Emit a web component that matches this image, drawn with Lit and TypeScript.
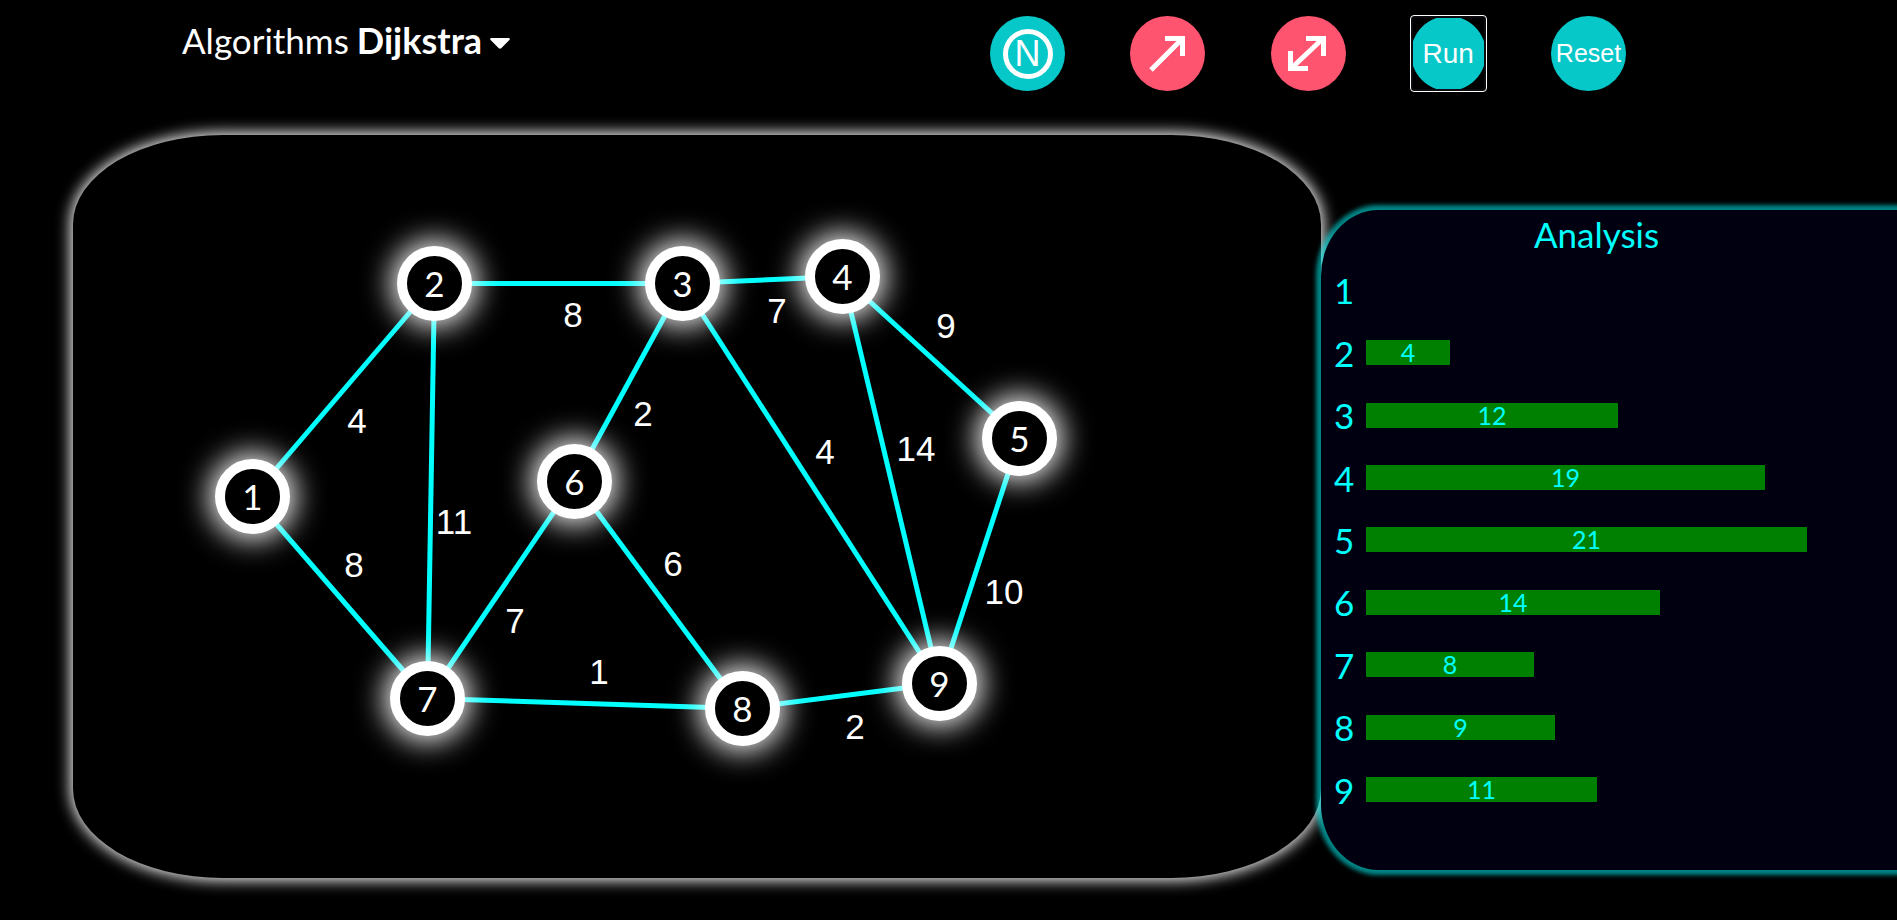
import { LitElement, html, svg, css } from "lit";
import { customElement } from "lit/decorators.js";

interface GraphNode {
  id: number;
  x: number;
  y: number;
}

interface GraphEdge {
  from: number;
  to: number;
  weight: number;
  labelX: number;
  labelY: number;
}

const NODES: GraphNode[] = [
  { id: 1, x: 142, y: 324 },
  { id: 2, x: 324, y: 111 },
  { id: 3, x: 572, y: 111 },
  { id: 4, x: 732, y: 104 },
  { id: 5, x: 909, y: 266 },
  { id: 6, x: 464, y: 309 },
  { id: 7, x: 317, y: 526 },
  { id: 8, x: 632, y: 536 },
  { id: 9, x: 829, y: 511 },
];

const EDGES: GraphEdge[] = [
  { from: 1, to: 2, weight: 4, labelX: 284, labelY: 298 },
  { from: 1, to: 7, weight: 8, labelX: 281, labelY: 442 },
  { from: 2, to: 7, weight: 11, labelX: 381, labelY: 399 },
  { from: 2, to: 3, weight: 8, labelX: 500, labelY: 192 },
  { from: 3, to: 4, weight: 7, labelX: 704, labelY: 188 },
  { from: 3, to: 6, weight: 2, labelX: 570, labelY: 291 },
  { from: 3, to: 9, weight: 4, labelX: 752, labelY: 329 },
  { from: 4, to: 9, weight: 14, labelX: 843, labelY: 326 },
  { from: 4, to: 5, weight: 9, labelX: 873, labelY: 203 },
  { from: 5, to: 9, weight: 10, labelX: 931, labelY: 469 },
  { from: 6, to: 8, weight: 6, labelX: 600, labelY: 441 },
  { from: 6, to: 7, weight: 7, labelX: 442, labelY: 498 },
  { from: 7, to: 8, weight: 1, labelX: 526, labelY: 549 },
  { from: 8, to: 9, weight: 2, labelX: 782, labelY: 604 },
];

const DISTANCES = [0, 4, 12, 19, 21, 14, 8, 9, 11];
const BAR_UNIT = 21;
const NODE_RADIUS = 37.5;

@customElement("graph-toolbar")
export class GraphToolbar extends LitElement {
  static styles = css`
    :host {
      display: block;
    }
    .bar {
      display: grid;
      grid-template-columns: 990fr 907fr;
      align-items: start;
      padding-top: 16px;
    }
    .picker {
      display: flex;
      align-items: center;
      padding-left: 182px;
      padding-top: 3px;
      font-size: 35px;
      line-height: 42px;
    }
    .algorithm {
      appearance: none;
      margin: 0 0 0 8px;
      padding: 0;
      border: 0;
      background: transparent;
      color: #fff;
      font: 700 36px/42px Lato, sans-serif;
    }
    .caret {
      width: 20px;
      height: 11px;
      margin-left: 7px;
      margin-top: 6px;
    }
    .tools {
      display: flex;
      justify-content: space-between;
      width: 636px;
    }
    .tool {
      display: flex;
      align-items: center;
      justify-content: center;
      box-sizing: border-box;
      width: 75px;
      height: 75px;
      margin: 0;
      padding: 0;
      border: 0;
      border-radius: 50%;
      background: #06c8c9;
      color: #fff;
      font-family: "Liberation Sans", Arial, sans-serif;
      font-size: 25px;
    }
    .edge {
      background: #ff5470;
    }
    .current {
      border: 2px solid #0c0c10;
      border-radius: 3px;
      outline: 1px solid #fff;
      background: radial-gradient(circle, #06c8c9 37px, #000 38px);
      font-size: 28px;
    }
    .ring {
      display: flex;
      align-items: center;
      justify-content: center;
      box-sizing: border-box;
      width: 50px;
      height: 50px;
      border: 5px solid #fff;
      border-radius: 50%;
      font-size: 36px;
      line-height: 40px;
    }
    .arrow {
      width: 75px;
      height: 75px;
      fill: none;
      stroke: #fff;
      stroke-width: 5;
    }
  `;

  render() {
    return html`
      <header class="bar">
        <div class="picker">
          <label for="algorithm">Algorithms</label>
          <select id="algorithm" class="algorithm">
            <option>Dijkstra</option>
          </select>
          <svg class="caret" viewBox="0 0 20 11" aria-hidden="true">
            <path
              d="M1.5 0h17c1.2 0 1.7 1.3.9 2.1L11.2 10.3c-.7.6-1.7.6-2.4 0L.6 2.1C-.2 1.3.3 0 1.5 0z"
              fill="#fff"
            />
          </svg>
        </div>
        <div class="tools">
          <button class="tool" aria-label="Add node"><span class="ring">N</span></button>
          <button class="tool edge" aria-label="Add directed edge">
            <svg class="arrow" viewBox="0 0 75 75">
              <path d="M21 54 53 22M35 22.5H52.5V40" />
            </svg>
          </button>
          <button class="tool edge" aria-label="Add two-way edge">
            <svg class="arrow" viewBox="0 0 75 75">
              <path d="M19.500 53 52.500 22M35 22.5H52.5V40M19.500 35V52.5H37" />
            </svg>
          </button>
          <button class="tool current">Run</button>
          <button class="tool">Reset</button>
        </div>
      </header>
    `;
  }
}

@customElement("graph-canvas")
export class GraphCanvas extends LitElement {
  static styles = css`
    :host {
      display: block;
    }
    .canvas {
      position: relative;
      height: 743px;
      border-radius: 12%;
      background: #000;
      box-shadow: 0 0 15px 2px #fff;
    }
    .edges {
      display: block;
      width: 100%;
      height: 100%;
    }
    .line {
      stroke: #0ff;
      stroke-width: 5;
    }
    .weight {
      fill: #fff;
      font-family: "Liberation Sans", Arial, sans-serif;
      font-size: 35px;
      text-anchor: middle;
    }
    .node {
      position: absolute;
      box-sizing: border-box;
      width: 75px;
      height: 75px;
      border: 10px solid #fff;
      border-radius: 50%;
      background: #000;
      box-shadow: 0 0 30px 5px #fff;
      font-size: 35px;
      line-height: 54px;
      text-align: center;
    }
  `;

  private center(id: number) {
    const node = NODES.find((n) => n.id === id)!;
    return { x: node.x + NODE_RADIUS, y: node.y + NODE_RADIUS };
  }

  render() {
    return html`
      <section class="canvas" aria-label="Graph">
        <svg class="edges">
          ${EDGES.map((e) => {
            const a = this.center(e.from);
            const b = this.center(e.to);
            return svg`
              <line class="line" x1=${a.x} y1=${a.y} x2=${b.x} y2=${b.y} />
              <text class="weight" x=${e.labelX} y=${e.labelY}>${e.weight}</text>
            `;
          })}
        </svg>
        ${NODES.map(
          (n) => html`<div class="node" style="left:${n.x}px;top:${n.y}px">${n.id}</div>`
        )}
      </section>
    `;
  }
}

@customElement("analysis-panel")
export class AnalysisPanel extends LitElement {
  static styles = css`
    :host {
      display: block;
    }
    .panel {
      position: relative;
      box-sizing: border-box;
      height: 660px;
      padding: 3px 38px 49px 13px;
      display: flex;
      flex-direction: column;
      border-radius: 10% 0 0 10%;
      background: #000011;
      box-shadow: 0 0 4px 5px rgba(0, 255, 255, 0.53);
      color: #0ff;
    }
    .title {
      margin: 0 0 4px;
      font-size: 35px;
      font-weight: 400;
      line-height: 42px;
      text-align: center;
    }
    .rows {
      flex: 1;
      display: grid;
      grid-auto-rows: 1fr;
      margin: 0;
      padding: 0;
      list-style: none;
    }
    .row {
      display: flex;
      align-items: center;
      gap: 12px;
    }
    .name {
      width: 20px;
      font-size: 35px;
      line-height: 42px;
    }
    .value {
      height: 25px;
      background: green;
      font-size: 25px;
      line-height: 25px;
      text-align: center;
    }
  `;

  render() {
    return html`
      <section class="panel">
        <h2 class="title">Analysis</h2>
        <ol class="rows">
          ${DISTANCES.map(
            (d, i) => html`
              <li class="row">
                <span class="name">${i + 1}</span>
                <div class="value" style="width:${d * BAR_UNIT}px">${d || ""}</div>
              </li>
            `
          )}
        </ol>
      </section>
    `;
  }
}

@customElement("app-root")
export class AppRoot extends LitElement {
  static styles = css`
    :host {
      display: block;
      box-sizing: border-box;
      min-height: 100vh;
      overflow: hidden;
      background: #000;
      color: #fff;
      font-family: Lato, sans-serif;
    }
    .work {
      display: grid;
      grid-template-columns: 1248fr 576fr;
      align-items: start;
      padding-left: 73px;
      margin-top: 44px;
    }
    .side {
      margin-top: 75px;
    }
  `;

  render() {
    return html`
      <graph-toolbar></graph-toolbar>
      <main class="work">
        <graph-canvas></graph-canvas>
        <analysis-panel class="side"></analysis-panel>
      </main>
    `;
  }
}
